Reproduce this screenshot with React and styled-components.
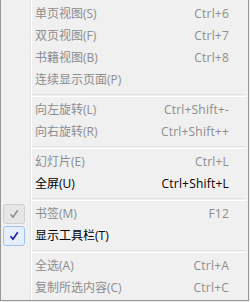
import React from "react";
import styled, { createGlobalStyle } from "styled-components";

const Global = createGlobalStyle`
  html, body { margin: 0; padding: 0; background: #f0f0f0; }
  body { font-family: "Open Sans", "Noto Sans CJK SC", sans-serif; }
`;

const Menu = styled.div`
  box-sizing: border-box;
  width: 249px;
  height: 301px;
  border: 1px solid #979797;
  border-top: none;
  padding-top: 3px;
  background:
    linear-gradient(to right, transparent 29px, #e2e3e3 29px, #e2e3e3 30px, #ffffff 30px, #ffffff 31px, transparent 31px),
    #f0f0f0;
  display: flex;
  flex-direction: column;
`;

const Row = styled.div`
  display: grid;
  grid-template-columns: 34px 1fr auto;
  align-items: center;
  height: 22px;
  padding-right: 19px;
  font-size: 12px;
  line-height: 22px;
  color: ${(p) => (p.$enabled ? "#000000" : "#8d8d8d")};
`;

const Gutter = styled.div`
  display: flex;
  align-items: center;
  height: 22px;
`;

const Label = styled.span`
  white-space: nowrap;
  font-family: "Open Sans", "Noto Sans CJK SC", sans-serif;
`;

const Shortcut = styled.span`
  white-space: nowrap;
  font-family: "Open Sans", sans-serif;
  text-align: right;
  letter-spacing: 0.2px;
`;

const Separator = styled.div`
  height: 8px;
  display: flex;
  align-items: center;
  padding-left: 31px;
  padding-right: 2px;
  &::after {
    content: "";
    flex: 1;
    height: 1px;
    border-top: 1px solid #e2e3e3;
    border-bottom: 1px solid #ffffff;
  }
`;

const CheckBox = styled.div`
  box-sizing: border-box;
  margin-left: 2px;
  width: 22px;
  height: 20px;
  border: 1px solid ${(p) => (p.$active ? "#9ec3ec" : "#cfcfcf")};
  border-radius: 3px;
  background: ${(p) => (p.$active ? "#e6eefa" : "#e6e6e6")};
  display: flex;
  align-items: center;
  justify-content: center;
  svg { display: block; }
`;

const Check = ({ color }) => (
  <svg width="10" height="10" viewBox="0 0 10 10">
    <path d="M1.5 5.2 L4 8.2 L8.7 1.2" fill="none" stroke={color} strokeWidth="1.6" />
  </svg>
);

const groups = [
  [
    { label: "单页视图(S)", sc: "Ctrl+6" },
    { label: "双页视图(F)", sc: "Ctrl+7" },
    { label: "书籍视图(B)", sc: "Ctrl+8" },
    { label: "连续显示页面(P)", sc: "" },
  ],
  [
    { label: "向左旋转(L)", sc: "Ctrl+Shift+-" },
    { label: "向右旋转(R)", sc: "Ctrl+Shift++" },
  ],
  [
    { label: "幻灯片(E)", sc: "Ctrl+L" },
    { label: "全屏(U)", sc: "Ctrl+Shift+L", enabled: true },
  ],
  [
    { label: "书签(M)", sc: "F12", check: "off" },
    { label: "显示工具栏(T)", sc: "", enabled: true, check: "on" },
  ],
  [
    { label: "全选(A)", sc: "Ctrl+A" },
    { label: "复制所选内容(C)", sc: "Ctrl+C" },
  ],
];

export default function App() {
  return (
    <>
      <Global />
      <Menu>
        {groups.map((g, gi) => (
          <React.Fragment key={gi}>
            {gi > 0 && <Separator />}
            {g.map((it) => (
              <Row key={it.label} $enabled={it.enabled}>
                <Gutter>
                  {it.check && (
                    <CheckBox $active={it.check === "on"}>
                      <Check color={it.check === "on" ? "#1c1cb4" : "#8f8f8f"} />
                    </CheckBox>
                  )}
                </Gutter>
                <Label>{it.label}</Label>
                <Shortcut>{it.sc}</Shortcut>
              </Row>
            ))}
          </React.Fragment>
        ))}
      </Menu>
    </>
  );
}
